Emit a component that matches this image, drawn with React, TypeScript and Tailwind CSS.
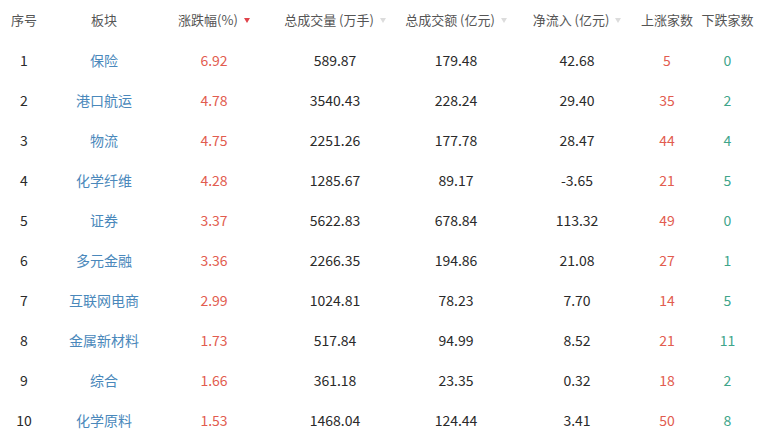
const rows = [
    ['1', '保险', '6.92', '589.87', '179.48', '42.68', '5', '0'],
    ['2', '港口航运', '4.78', '3540.43', '228.24', '29.40', '35', '2'],
    ['3', '物流', '4.75', '2251.26', '177.78', '28.47', '44', '4'],
    ['4', '化学纤维', '4.28', '1285.67', '89.17', '-3.65', '21', '5'],
    ['5', '证券', '3.37', '5622.83', '678.84', '113.32', '49', '0'],
    ['6', '多元金融', '3.36', '2266.35', '194.86', '21.08', '27', '1'],
    ['7', '互联网电商', '2.99', '1024.81', '78.23', '7.70', '14', '5'],
    ['8', '金属新材料', '1.73', '517.84', '94.99', '8.52', '21', '11'],
    ['9', '综合', '1.66', '361.18', '23.35', '0.32', '18', '2'],
    ['10', '化学原料', '1.53', '1468.04', '124.44', '3.41', '50', '8'],
]

// column widths taken from the screenshot (centers at 24/104/214/335/456/577/667/728)
const grid = 'grid grid-cols-[48px_112px_108px_134px_108px_134px_46px_75px] items-center'

const Caret = ({ active = false }: { active?: boolean }) => (
    <span
        className={`ml-[6px] inline-block w-0 h-0 border-l-[3.5px] border-r-[3.5px] border-t-[5px] border-l-transparent border-r-transparent ${
            active ? 'border-t-[#e0434a]' : 'border-t-[#dcdcdc]'
        }`}
    />
)

const Head = ({ label, sort, active }: { label: string; sort?: boolean; active?: boolean }) => (
    <div className="flex items-center justify-center whitespace-nowrap">
        <span>{label}</span>
        {sort && <Caret active={active} />}
    </div>
)

export default function App() {
    return (
        <div
            className="w-[765px] h-[438px] overflow-hidden bg-white text-[#2a2a2a]"
            style={{ fontFamily: '"Noto Sans CJK SC", "Noto Sans", sans-serif' }}
        >
            <div className={`${grid} h-[40px] text-[13px] text-[#555]`}>
                <Head label="序号" />
                <Head label="板块" />
                <Head label="涨跌幅(%)" sort active />
                <Head label="总成交量 (万手)" sort />
                <Head label="总成交额 (亿元)" sort />
                <Head label="净流入 (亿元)" sort />
                <Head label="上涨家数" />
                <Head label="下跌家数" />
            </div>
            {rows.map((r) => (
                <div key={r[0]} className={`${grid} h-[40px] text-[14px] whitespace-nowrap`}>
                    <div className="text-center">{r[0]}</div>
                    <div className="text-center text-[#4a88bb]">{r[1]}</div>
                    <div className="text-center text-[#e25c4f]">{r[2]}</div>
                    <div className="text-center">{r[3]}</div>
                    <div className="text-center">{r[4]}</div>
                    <div className="text-center">{r[5]}</div>
                    <div className="text-center text-[#e25c4f]">{r[6]}</div>
                    <div className="text-center text-[#3ea58a]">{r[7]}</div>
                </div>
            ))}
        </div>
    )
}
